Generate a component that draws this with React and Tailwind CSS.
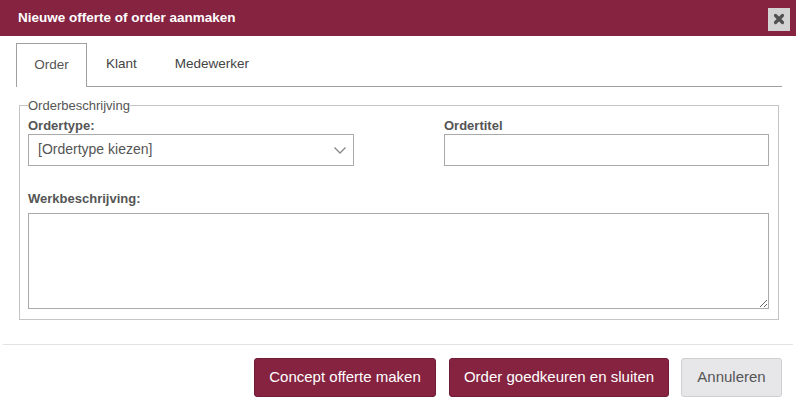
import React from "react";

const tabs = ["Order", "Klant", "Medewerker"];

export default function App() {
  return (
    <div className="w-[796px] h-[405px] bg-white font-['Liberation_Sans',Arial,sans-serif] text-[#444] overflow-hidden">
      <div className="h-[36px] bg-[#862341] flex items-center justify-between pl-[18px] pr-[6px]">
        <h1 className="text-white font-bold text-[13.5px]">Nieuwe offerte of order aanmaken</h1>
        <button className="w-[22px] h-[23px] bg-[#d3d3d3] flex items-center justify-center mt-[2px]">
          <svg width="12" height="12" viewBox="0 0 12 12">
            <path d="M2.5 2.5L9.5 9.5M9.5 2.5L2.5 9.5" stroke="#505050" strokeWidth="3.2" strokeLinecap="round" />
          </svg>
        </button>
      </div>

      <div className="ml-[16px] mr-[14px] mt-[7px] flex border-b border-[#a0a0a0]">
        {tabs.map((t, i) => (
          <div
            key={t}
            className={
              i === 0
                ? "h-[44px] w-[71px] -mb-px border border-b-0 border-[#a0a0a0] bg-white flex items-center justify-center text-[13.5px] text-[#555]"
                : "h-[43px] px-[19px] flex items-center text-[13.5px] text-[#444]"
            }
          >
            {t}
          </div>
        ))}
      </div>

      <fieldset className="mx-[19px] mt-[9px] border border-[#c4c4c4] pl-[8px] pr-[9px] pt-[2px] pb-[10px]">
        <legend className="text-[13px] text-[#555] px-0">Orderbeschrijving</legend>
        <div className="grid grid-cols-[326px_325px] gap-x-[90px]">
          <div>
            <label className="block font-bold text-[13px] text-[#555] leading-[16px]">Ordertype:</label>
            <div className="h-[32px] border border-[#aaa] flex items-center justify-between pl-[9px] pr-[6px]">
              <span className="text-[14px] text-[#555]">[Ordertype kiezen]</span>
              <svg width="14" height="10" viewBox="0 0 14 10">
                <path d="M1.5 2.5L7 8L12.5 2.5" fill="none" stroke="#888" strokeWidth="1.3" />
              </svg>
            </div>
          </div>
          <div>
            <label className="block font-bold text-[13px] text-[#555] leading-[16px]">Ordertitel</label>
            <input className="block w-full h-[32px] border border-[#aaa] outline-none" />
          </div>
        </div>
        <label className="block font-bold text-[13px] text-[#555] leading-[16px] mt-[25px] mb-[6px]">Werkbeschrijving:</label>
        <textarea className="block w-full h-[96px] border border-[#aaa] outline-none resize-y" />
      </fieldset>

      <div className="mx-[3px] mt-[24px] border-t border-[#e3e3e3]" />

      <div className="flex justify-end gap-[13px] pr-[14px] mt-[13px]">
        <button className="h-[39px] w-[182px] rounded-[3px] bg-[#862341] border border-[#6f1c36] text-white text-[15px]">
          Concept offerte maken
        </button>
        <button className="h-[39px] w-[220px] rounded-[3px] bg-[#862341] border border-[#6f1c36] text-white text-[15px]">
          Order goedkeuren en sluiten
        </button>
        <button className="h-[39px] w-[101px] rounded-[3px] bg-[#e7e7ea] border border-[#cfcfd2] text-[#555] text-[15px] ml-[-1px]">
          Annuleren
        </button>
      </div>
    </div>
  );
}
